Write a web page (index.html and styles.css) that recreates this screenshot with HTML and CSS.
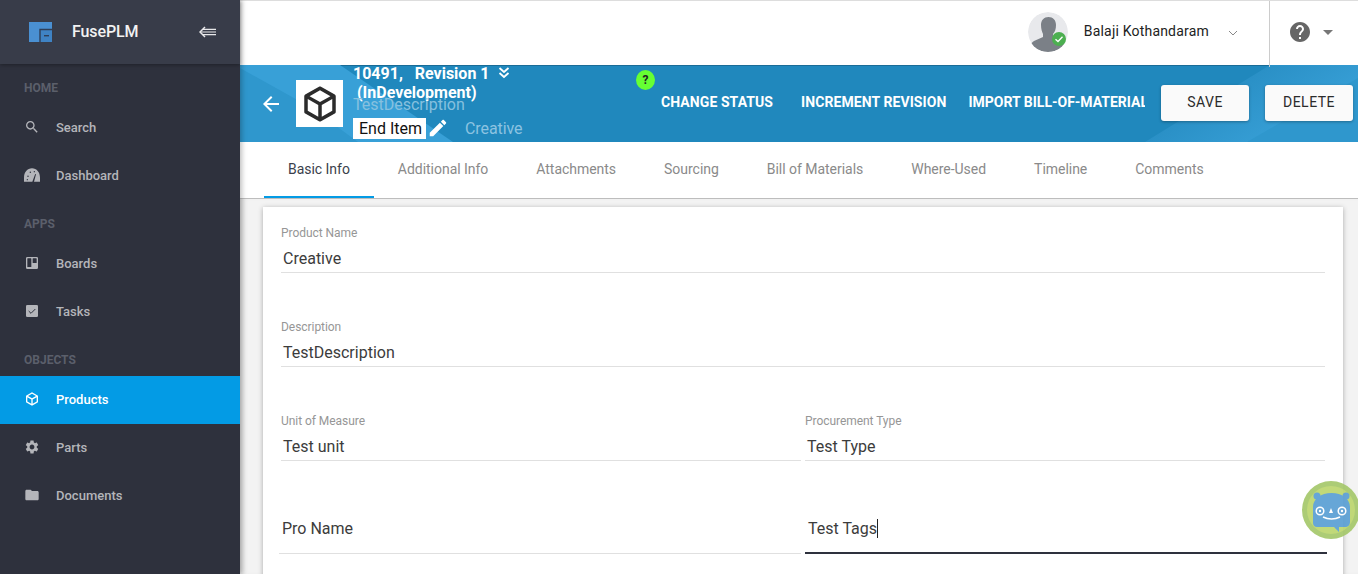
FILE: index.html
```html
<!DOCTYPE html>
<html>
<head>
    <title>FusePLM - Products</title>
    <link rel="stylesheet" href="styles.css">
</head>
<body>
<div class="app">
    <!-- Sidebar -->
    <aside class="sidebar">
        <div class="brand">
            <svg class="brand-logo" width="24" height="20" viewBox="0 0 24 20">
                <rect width="23" height="20" fill="#4a90d2"/>
                <path d="M11 7.5h12v12.5H11z" fill="#3f83c4"/>
                <path d="M11 20V7.5h12" fill="none" stroke="#2f3f58" stroke-width="1.4"/>
                <rect x="15" y="13" width="5" height="1.4" fill="#2f3f58"/>
            </svg>
            <span class="brand-name">FusePLM</span>
            <svg class="brand-toggle" width="18" height="12" viewBox="0 0 18 12">
                <path d="M6 1 1 6l5 5" fill="none" stroke="#e8e8ea" stroke-width="1.5"/>
                <path d="M4 3.4h13M2 6h15M4 8.6h13" stroke="#e8e8ea" stroke-width="1.2"/>
            </svg>
        </div>
        <nav>
            <div class="nav-title">HOME</div>
            <a class="nav-item">
                <svg class="nav-icon" viewBox="0 0 24 24"><path d="M15.5 14h-.79l-.28-.27C15.41 12.59 16 11.11 16 9.5 16 5.91 13.09 3 9.5 3S3 5.91 3 9.5 5.91 16 9.5 16c1.61 0 3.09-.59 4.23-1.57l.27.28v.79l5 4.99L20.49 19l-4.99-5zm-6 0C7.01 14 5 11.99 5 9.5S7.01 5 9.5 5 14 7.01 14 9.5 11.99 14 9.5 14z"/></svg>
                Search
            </a>
            <a class="nav-item">
                <svg class="nav-icon" viewBox="0 0 24 24">
                    <path d="M0 22v-6C0 8 5 2 12 2s12 6 12 14v6h-9l3-11-1.200-.5L12.500 22H0z"/>
                    <circle cx="6" cy="14" r="1.100" fill="#2e313d"/>
                    <circle cx="9.500" cy="8" r="1.100" fill="#2e313d"/>
                    <circle cx="15.500" cy="7" r="1" fill="#2e313d"/>
                    <circle cx="5" cy="19" r="1" fill="#2e313d"/>
                </svg>
                Dashboard
            </a>
            <div class="nav-title">APPS</div>
            <a class="nav-item">
                <svg class="nav-icon" viewBox="0 0 24 24"><path fill-rule="evenodd" d="M5,3H19A2,2 0 0,1 21,5V19A2,2 0 0,1 19,21H5A2,2 0 0,1 3,19V5A2,2 0 0,1 5,3M5.5,5A0.5,0.5 0 0,0 5,5.5V17.5A0.5,0.5 0 0,0 5.5,18H10.5A0.5,0.5 0 0,0 11,17.5V5.5A0.5,0.5 0 0,0 10.5,5H5.5M13.5,5A0.5,0.5 0 0,0 13,5.5V11.5A0.5,0.5 0 0,0 13.5,12H18.5A0.5,0.5 0 0,0 19,11.5V5.5A0.5,0.5 0 0,0 18.5,5H13.5Z"/></svg>
                Boards
            </a>
            <a class="nav-item">
                <svg class="nav-icon" viewBox="0 0 24 24">
                    <rect x="3" y="3" width="18" height="18" rx="2"/>
                    <path d="M7 12l3.5 3.5L17 9" fill="none" stroke="#2e313d" stroke-width="1.5"/>
                </svg>
                Tasks
            </a>
            <div class="nav-title">OBJECTS</div>
            <a class="nav-item active">
                <svg class="nav-icon" viewBox="0 0 24 24"><path d="M21,16.5C21,16.88 20.79,17.21 20.47,17.38L12.57,21.82C12.41,21.94 12.21,22 12,22C11.79,22 11.59,21.94 11.43,21.82L3.53,17.38C3.21,17.21 3,16.88 3,16.5V7.5C3,7.12 3.21,6.79 3.53,6.62L11.43,2.18C11.59,2.06 11.79,2 12,2C12.21,2 12.41,2.06 12.57,2.18L20.47,6.62C20.79,6.79 21,7.12 21,7.5V16.5M12,4.15L6.04,7.5L12,10.85L17.96,7.5L12,4.15M5,15.91L11,19.29V12.58L5,9.21V15.91M19,15.91V9.21L13,12.58V19.29L19,15.91Z"/></svg>
                Products
            </a>
            <a class="nav-item">
                <svg class="nav-icon" viewBox="0 0 24 24"><path d="M19.14 12.94c.04-.3.06-.61.06-.94 0-.32-.02-.64-.07-.94l2.03-1.58c.18-.14.23-.41.12-.61l-1.92-3.32c-.12-.22-.37-.29-.59-.22l-2.39.96c-.5-.38-1.03-.7-1.62-.94l-.36-2.54c-.04-.24-.24-.41-.48-.41h-3.84c-.24 0-.43.17-.47.41l-.36 2.54c-.59.24-1.13.57-1.62.94l-2.39-.96c-.22-.08-.47 0-.59.22L2.74 8.87c-.12.21-.08.47.12.61l2.03 1.58c-.05.3-.09.63-.09.94s.02.64.07.94l-2.03 1.58c-.18.14-.23.41-.12.61l1.92 3.32c.12.22.37.29.59.22l2.39-.96c.5.38 1.03.7 1.62.94l.36 2.54c.05.24.24.41.48.41h3.84c.24 0 .44-.17.47-.41l.36-2.54c.59-.24 1.13-.56 1.62-.94l2.39.96c.22.08.47 0 .59-.22l1.92-3.32c.12-.22.07-.47-.12-.61l-2.01-1.58zM12 15.6c-1.98 0-3.6-1.62-3.6-3.6s1.62-3.6 3.6-3.6 3.6 1.62 3.6 3.6-1.62 3.6-3.6 3.6z"/></svg>
                Parts
            </a>
            <a class="nav-item">
                <svg class="nav-icon" viewBox="0 0 24 24"><path d="M10 4H4c-1.1 0-1.99.9-1.99 2L2 18c0 1.1.9 2 2 2h16c1.1 0 2-.9 2-2V8c0-1.1-.9-2-2-2h-8l-2-2z"/></svg>
                Documents
            </a>
        </nav>
    </aside>

    <main class="main">
        <!-- Top bar -->
        <header class="topbar">
            <div class="user">
                <div class="avatar">
                    <svg width="40" height="40" viewBox="0 0 40 40">
                        <circle cx="20" cy="20" r="20" fill="#e8e9ec"/>
                        <path d="M13 13c0-5 3-8 7.500-8S28 8 28 13c0 4-1 7-3 9v3l9 4c2 1 3 3 3 4-4 4-10 7-17 7S7 37 3 33c0-1 1-3 3-4l9-4v-3c-1-2-2-5-2-9z" fill="#7b8087"/>
                    </svg>
                    <span class="avatar-status">
                        <svg width="10" height="10" viewBox="0 0 10 10"><path d="M1.500 5.200 4 7.500 8.500 2.700" fill="none" stroke="#fff" stroke-width="1.300"/></svg>
                    </span>
                </div>
                <span class="user-name">Balaji Kothandaram</span>
                <svg class="user-chevron" width="10" height="6" viewBox="0 0 10 6"><path d="M1 1l4 4 4-4" fill="none" stroke="#888" stroke-width="1"/></svg>
            </div>
            <div class="help">
                <svg width="24" height="24" viewBox="0 0 24 24" fill="#666"><path d="M12 2C6.48 2 2 6.48 2 12s4.480 10 10 10 10-4.480 10-10S17.520 2 12 2zm1 17h-2v-2h2v2zm2.070-7.750l-.9.920C13.450 12.900 13 13.500 13 15h-2v-.5c0-1.100.45-2.100 1.170-2.830l1.240-1.260c.37-.36.59-.86.59-1.410 0-1.100-.9-2-2-2s-2 .9-2 2H8c0-2.210 1.790-4 4-4s4 1.790 4 4c0 .88-.36 1.680-.93 2.250z"/></svg>
                <span class="help-caret"></span>
            </div>
        </header>

        <!-- Product banner -->
        <section class="banner">
            <svg class="banner-bg" viewBox="0 0 1118 77" preserveAspectRatio="none">
                <defs>
                    <linearGradient id="bannerShade" gradientUnits="userSpaceOnUse" x1="967" y1="38" x2="1005" y2="100">
                        <stop offset="0" stop-color="#2a90c6"/>
                        <stop offset="1" stop-color="#38a0d7"/>
                    </linearGradient>
                </defs>
                <polygon points="0,0 100,0 213,77 0,77" fill="#38a0d7"/>
                <polygon points="0,3 70,42 118,77 0,77" fill="#2f97cd"/>
                <polygon points="905,77 1030,0 1118,0 1118,77" fill="url(#bannerShade)"/>
                <polygon points="1007,77 1118,13 1118,77" fill="#2f97cd"/>
            </svg>
            <svg class="back-arrow" width="24" height="24" viewBox="0 0 24 24" fill="#fff"><path d="M20 11H7.830l5.590-5.590L12 4l-8 8 8 8 1.410-1.410L7.830 13H20v-2z"/></svg>
            <div class="product-image">
                <svg width="42" height="42" viewBox="0 0 24 24" fill="#2b2b2b"><path d="M21,16.5C21,16.88 20.79,17.21 20.47,17.38L12.57,21.82C12.41,21.94 12.21,22 12,22C11.79,22 11.59,21.94 11.43,21.82L3.53,17.38C3.21,17.21 3,16.88 3,16.5V7.500C3,7.120 3.210,6.790 3.530,6.620L11.430,2.180C11.590,2.060 11.790,2 12,2C12.210,2 12.410,2.060 12.570,2.180L20.470,6.620C20.790,6.790 21,7.120 21,7.500V16.500M12,4.150L6.040,7.500L12,10.850L17.960,7.500L12,4.150M5,15.910L11,19.290V12.580L5,9.210V15.910M19,15.910V9.210L13,12.580V19.290L19,15.910Z"/></svg>
            </div>
            <div class="product-info">
                <div class="product-title">
                    <span>10491,&nbsp;&nbsp; Revision 1</span>
                    <svg width="14" height="14" viewBox="0 0 14 14"><path d="M2.500 2 7 6l4.500-4M2.500 7 7 11l4.500-4" fill="none" stroke="#fff" stroke-width="1.800"/></svg>
                </div>
                <div class="product-status">(InDevelopment)</div>
                <div class="product-desc">TestDescription</div>
                <div class="product-meta">
                    <span class="item-type">End Item</span>
                    <svg width="22" height="22" viewBox="0 0 24 24" fill="#fff"><path d="M3 17.250V21h3.750L17.810 9.940l-3.750-3.750L3 17.250zM20.710 7.040c.39-.39.39-1.020 0-1.410l-2.340-2.340c-.39-.39-1.020-.39-1.410 0l-1.830 1.830 3.750 3.750 1.830-1.830z"/></svg>
                    <span class="product-name">Creative</span>
                </div>
            </div>
            <span class="status-help">?</span>
            <div class="banner-actions">
                <a>CHANGE STATUS</a>
                <a>INCREMENT REVISION</a>
                <a class="import-link">IMPORT BILL-OF-MATERIALS</a>
            </div>
            <button class="banner-btn">SAVE</button>
            <button class="banner-btn">DELETE</button>
        </section>

        <!-- Tabs -->
        <div class="tabs">
            <a class="tab active">Basic Info</a>
            <a class="tab">Additional Info</a>
            <a class="tab">Attachments</a>
            <a class="tab">Sourcing</a>
            <a class="tab">Bill of Materials</a>
            <a class="tab">Where-Used</a>
            <a class="tab">Timeline</a>
            <a class="tab">Comments</a>
        </div>

        <!-- Basic info form -->
        <div class="content">
            <form class="card">
                <div class="field">
                    <label>Product Name</label>
                    <div class="value">Creative</div>
                </div>
                <div class="field">
                    <label>Description</label>
                    <div class="value">TestDescription</div>
                </div>
                <div class="row">
                    <div class="field">
                        <label>Unit of Measure</label>
                        <div class="value">Test unit</div>
                    </div>
                    <div class="field">
                        <label>Procurement Type</label>
                        <div class="value">Test Type</div>
                    </div>
                </div>
                <div class="row row-plain">
                    <div class="plain-value">Pro Name</div>
                    <div class="plain-value focused">Test Tags<span class="caret"></span></div>
                </div>
            </form>
        </div>

        <!-- Chat bot launcher -->
        <div class="bot">
            <svg width="58" height="58" viewBox="0 0 58 58">
                <circle cx="29" cy="29" r="29" fill="#a5c86b"/>
                <circle cx="29" cy="29" r="24" fill="#bcd66e"/>
                <path d="M15 15l6 6M44 15l-6 6" stroke="#5a9fd4" stroke-width="2"/>
                <circle cx="15" cy="15" r="3.500" fill="#5a9fd4"/>
                <circle cx="44" cy="15" r="3.500" fill="#5a9fd4"/>
                <path d="M11 26c0-8 8-14 18.500-14S48 18 48 26v15c0 3-2 5-5 5h-6v5l-5-5H15c-2.500 0-4-2-4-4V26z" fill="#5a9fd4"/>
                <circle cx="18" cy="30" r="3.800" fill="none" stroke="#fff" stroke-width="1.500"/>
                <circle cx="40" cy="30" r="3.800" fill="none" stroke="#fff" stroke-width="1.500"/>
                <circle cx="18" cy="30" r="1.200" fill="#fff"/>
                <circle cx="40" cy="30" r="1.200" fill="#fff"/>
                <path d="M29 27l2 5h-4z" fill="#fff"/>
                <path d="M21 36c5 2.500 12 2.500 17 0" fill="none" stroke="#fff" stroke-width="1.500"/>
            </svg>
        </div>
    </main>
</div>
</body>
</html>
```

FILE: styles.css
```css
* {
    box-sizing: border-box;
}

html,
body {
    margin: 0;
    padding: 0;
    background-color: #fff;
    font-family: Roboto, "Liberation Sans", sans-serif;
}

.app {
    display: flex;
    width: 1358px;
    height: 574px;
    overflow: hidden;
}

/* Sidebar */
.sidebar {
    width: 240px;
    flex-shrink: 0;
    background-color: #2e313d;
    position: relative;
    z-index: 3;
    box-shadow: 2px 0 5px rgba(0, 0, 0, 0.25);
}

.brand {
    display: flex;
    align-items: center;
    height: 64px;
    padding-left: 29px;
    background-color: #383c49;
    box-shadow: 0 1px 4px rgba(0, 0, 0, 0.35);
}

.brand-name {
    margin: -2px 0 0 19px;
    color: #f2f2f2;
    font-size: 16px;
    font-weight: 500;
    letter-spacing: -0.1px;
}

.brand-toggle {
    margin-left: 60px;
}

.nav-title {
    height: 40px;
    padding: 8px 0 0 24px;
    color: #5b5f6b;
    font-size: 12px;
    font-weight: 700;
    line-height: 32px;
}

.nav-item {
    display: flex;
    align-items: center;
    height: 48px;
    padding: 0 0 2px 24px;
    color: #b4b5ba;
    font-size: 13px;
    font-weight: 500;
}

.nav-item.active {
    background-color: #039be5;
    color: #fff;
}

.nav-icon {
    width: 16px;
    height: 16px;
    margin-right: 16px;
    fill: #b4b5ba;
}

.nav-item.active .nav-icon {
    fill: #fff;
}

/* Main column */
.main {
    flex: 1;
    min-width: 0;
    position: relative;
    display: flex;
    flex-direction: column;
    background-color: #f3f3f3;
}

.topbar {
    display: flex;
    justify-content: flex-end;
    height: 65px;
    flex-shrink: 0;
    background-color: #fff;
    border-top: 1px solid #ddd;
}

.user {
    display: flex;
    align-items: center;
    height: 66px;
    padding: 0 31px 0 0;
    border-right: 1px solid #ccc;
    position: relative;
    z-index: 2;
}

.avatar {
    position: relative;
    width: 40px;
    height: 40px;
    margin-top: -4px;
    border-radius: 50%;
}

.avatar svg {
    display: block;
    border-radius: 50%;
}

.avatar-status {
    position: absolute;
    right: 2px;
    bottom: 6px;
    display: flex;
    align-items: center;
    justify-content: center;
    width: 14px;
    height: 14px;
    border-radius: 50%;
    background-color: #4caf50;
}

.avatar-status svg {
    border-radius: 0;
}

.user-name {
    margin: -6px 19px 0 16px;
    color: #222;
    font-size: 14px;
    letter-spacing: 0.2px;
}

.user-chevron {
    margin-top: -2px;
}

.help {
    display: flex;
    align-items: center;
    width: 88px;
    height: 62px;
    padding-left: 18px;
}

.help-caret {
    margin-left: 11px;
    border-left: 5px solid transparent;
    border-right: 5px solid transparent;
    border-top: 5px solid #777;
}

/* Banner */
.banner {
    position: relative;
    display: flex;
    align-items: center;
    height: 77px;
    flex-shrink: 0;
    padding-left: 19px;
    background-color: #2088bd;
    box-shadow: inset 0 1px 0 #1a6c97;
}

.banner-bg {
    position: absolute;
    left: 0;
    top: 0;
    width: 100%;
    height: 100%;
}

.back-arrow,
.product-image,
.product-info,
.banner-actions,
.banner-btn {
    position: relative;
}

.back-arrow {
    flex-shrink: 0;
}

.product-image {
    display: flex;
    align-items: center;
    justify-content: center;
    width: 47px;
    height: 47px;
    flex-shrink: 0;
    margin: 0 10px 0 13px;
    background-color: #fff;
}

.product-info {
    align-self: flex-start;
    width: 308px;
    flex-shrink: 0;
    margin-top: -2px;
    color: #fff;
}

.product-title {
    display: flex;
    align-items: center;
    height: 20px;
    font-size: 16px;
    font-weight: 700;
}

.product-title svg {
    margin-left: 7px;
}

.product-status {
    height: 20px;
    padding-left: 4px;
    font-size: 16px;
    font-weight: 700;
    line-height: 20px;
}

.product-desc {
    height: 20px;
    margin-top: -8px;
    color: #86c0df;
    font-size: 16px;
    line-height: 20px;
}

.product-meta {
    display: flex;
    align-items: center;
    margin-top: 2px;
}

.item-type {
    padding: 0 4px 0 6px;
    background-color: #fff;
    color: #111;
    font-size: 16px;
    line-height: 21px;
}

.product-meta svg {
    margin-left: 1px;
}

.product-name {
    margin-left: 16px;
    color: #8cc3e1;
    font-size: 16px;
    letter-spacing: -0.1px;
}

.status-help {
    position: absolute;
    left: 396px;
    top: 5px;
    width: 19px;
    height: 20px;
    border-radius: 50%;
    background-color: #66ff33;
    color: #222;
    font-size: 12px;
    font-weight: 700;
    line-height: 20px;
    text-align: center;
}

.banner-actions {
    display: flex;
    gap: 28px;
    width: 484px;
    flex-shrink: 0;
    margin: -4px 16px 0 0;
    overflow: hidden;
    color: #fff;
    font-size: 14px;
    font-weight: 700;
    letter-spacing: 0.08px;
    white-space: nowrap;
}

.import-link {
    margin-left: -6px;
    letter-spacing: 0;
}

.banner-btn {
    width: 88px;
    height: 36px;
    flex-shrink: 0;
    margin: -2px 16px 0 0;
    padding: 0 0 2px;
    border: none;
    border-radius: 3px;
    background-color: #fafafa;
    box-shadow: 0 1px 3px rgba(0, 0, 0, 0.3);
    color: #2b2b2b;
    font-family: inherit;
    font-size: 14px;
    letter-spacing: 0.5px;
}

/* Tabs */
.tabs {
    display: flex;
    height: 57px;
    flex-shrink: 0;
    padding-left: 24px;
    background-color: #fff;
    border-bottom: 1px solid #bdbdbd;
}

.tab {
    height: 56px;
    padding: 0 24px;
    color: #8a8a8a;
    font-size: 14px;
    letter-spacing: -0.03px;
    line-height: 54px;
}

.tab.active {
    border-bottom: 2px solid #039be5;
    color: #3b3f4c;
}

/* Form card */
.content {
    flex: 1;
    min-height: 0;
    padding: 8px 15px 0 23px;
    overflow: hidden;
    box-shadow: inset 6px 0 6px -4px rgba(0, 0, 0, 0.12);
}

.card {
    height: 400px;
    padding: 0 18px;
    background-color: #fff;
    box-shadow: 0 1px 5px rgba(0, 0, 0, 0.3);
}

.field {
    height: 94px;
    padding-top: 18px;
}

.field label {
    display: block;
    height: 16px;
    color: #969696;
    font-size: 12px;
    letter-spacing: -0.05px;
    line-height: 16px;
}

.value {
    height: 32px;
    padding: 4px 0 0 2px;
    border-bottom: 1px solid #e0e0e0;
    color: #3c3c3c;
    font-size: 16px;
    line-height: 28px;
}

.row {
    display: grid;
    grid-template-columns: 1fr 1fr;
    gap: 4px;
}

.row-plain {
    margin: 0 -2px;
}

.plain-value {
    height: 65px;
    padding: 28px 0 0 3px;
    border-bottom: 1px solid #e0e0e0;
    color: #3c3c3c;
    font-size: 16px;
    line-height: 24px;
}

.plain-value.focused {
    border-bottom: 2px solid #2e313d;
}

.caret {
    display: inline-block;
    width: 1px;
    height: 19px;
    vertical-align: -4px;
    background-color: #222;
}

/* Bot launcher, sits over the page */
.bot {
    position: absolute;
    left: 1062px;
    top: 481px;
    width: 58px;
    height: 58px;
    z-index: 4;
    opacity: 0.92;
}
```
